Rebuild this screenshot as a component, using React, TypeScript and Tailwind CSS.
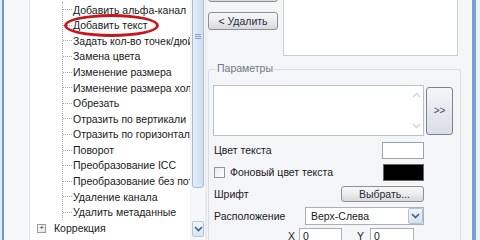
const items = [
  'Добавить альфа-канал',
  'Добавить текст',
  'Задать кол-во точек/дюйм',
  'Замена цвета',
  'Изменение размера',
  'Изменение размера холста',
  'Обрезать',
  'Отразить по вертикали',
  'Отразить по горизонтали',
  'Поворот',
  'Преобразование ICC',
  'Преобразование без потерь',
  'Удаление канала',
  'Удалить метаданные',
];

function Chevron({ className = '' }: { className?: string }) {
  return (
    <svg width="9" height="6" viewBox="0 0 9 6" className={className}>
      <path d="M1 1 L4.5 4.5 L8 1" fill="none" stroke="#3d5f8f" strokeWidth="1.6" />
    </svg>
  );
}

function TreePanel() {
  return (
    <div className="relative flex h-full w-[175px] bg-white">
      <div className="relative flex-1 overflow-hidden pt-[2px]">
        <div className="ml-[32px] border-l border-dotted border-[#a8a8a8]">
          {items.map((t) => (
            <div key={t} className="flex h-[15.6px] items-center whitespace-nowrap">
              <span className="w-[9px] shrink-0 border-t border-dotted border-[#a8a8a8]" />
              <span className="shrink-0 pl-[1px]">{t}</span>
            </div>
          ))}
        </div>
        <div className="flex h-[15.6px] items-center pl-[7px]">
          <span className="flex h-[9px] w-[9px] items-center justify-center border border-[#9a9a9a] bg-gradient-to-br from-white to-[#e4e4e4] text-[8px] leading-none text-[#333]">
            +
          </span>
          <span className="ml-[8px]">Коррекция</span>
        </div>
        <div className="pointer-events-none absolute left-[34px] top-[14px] h-[23px] w-[95px] rounded-[50%] border-[3.5px] border-[#c8161d]" />
      </div>
      <div className="flex w-[15px] flex-col border-l border-[#eef0f2] bg-[#f6f7f8] px-[1px]">
        <div className="-mt-[4px] flex h-[192px] items-center justify-center rounded-[3px] border border-[#a9bcd6] bg-gradient-to-r from-[#e6eef9] to-[#cfdcef]">
          <div className="-mt-[112px] flex flex-col gap-[1px]">
            <span className="h-[1px] w-[6px] bg-[#8aa0c0]" />
            <span className="h-[1px] w-[6px] bg-[#8aa0c0]" />
            <span className="h-[1px] w-[6px] bg-[#8aa0c0]" />
          </div>
        </div>
        <div className="flex-1" />
        <div className="mb-[3px] flex h-[16px] items-center justify-center rounded-[2px] border border-[#b7c6da] bg-gradient-to-b from-[#f2f6fb] to-[#dbe5f2]">
          <Chevron />
        </div>
      </div>
    </div>
  );
}

const btn =
  'flex items-center justify-center rounded-[3px] border border-[#8d9096] bg-gradient-to-b from-[#f7f7f7] via-[#ececec] to-[#d8d8d8] text-[#1d2a44]';

function RightPanel() {
  return (
    <div className="flex h-full w-[265px] flex-col bg-[#f4f5f6]">
      <div className="flex h-[57px]">
        <div className="ml-[1px] flex w-[70px] flex-col">
          <div className={`${btn} -mt-[16px] h-[18px]`} />
          <div className={`${btn} mt-[10px] h-[18px]`}>&lt; Удалить</div>
        </div>
        <div className="-mt-[2px] ml-[5px] h-[58px] w-[175px] border border-[#c9ced4] bg-white" />
      </div>
      <div className="relative mt-[13px] ml-[1px] w-[253px] flex-1 rounded-t-[3px] border border-b-0 border-[#d7dde4]">
        <span className="absolute -top-[7px] left-[7px] bg-[#f4f5f6] px-[1px] text-[#6d7a8c]">Параметры</span>
        <div className="flex pl-[4px] pt-[15px]">
          <div className="flex h-[51px] w-[211px] justify-end border border-[#b9c0c8] bg-white">
            <div className="mr-[1px] flex w-[12px] flex-col items-center justify-between py-[6px] opacity-40">
              <svg width="9" height="6" viewBox="0 0 9 6">
                <path d="M1 5 L4.5 1.5 L8 5" fill="none" stroke="#7f9bc4" strokeWidth="1.4" />
              </svg>
              <Chevron className="opacity-60" />
            </div>
          </div>
          <div className="ml-[2px] mt-[2px] flex h-[48px] w-[27px] items-center justify-center rounded-[3px] border border-[#7d838c] bg-gradient-to-b from-[#f3f5f8] to-[#d9dee6] text-[10px] text-[#3a4a63]">
            &gt;&gt;
          </div>
        </div>
        <div className="w-[215px] pl-[5px]">
          <div className="mt-[6px] flex h-[17px] items-center justify-between">
            <span>Цвет текста</span>
            <div className="h-[17px] w-[42px] border border-[#9ea4ab] bg-white" />
          </div>
          <div className="mt-[5px] flex h-[17px] items-center justify-between">
            <div className="flex items-center">
              <span className="h-[11px] w-[11px] border border-[#8f959c] bg-gradient-to-br from-[#e9ecef] to-white" />
              <span className="ml-[5px]">Фоновый цвет текста</span>
            </div>
            <div className="h-[17px] w-[41px] border border-[#666] bg-black" />
          </div>
          <div className="mt-[5px] flex h-[16px] items-center justify-between">
            <span>Шрифт</span>
            <div className={`${btn} h-[16px] w-[83px] pl-[4px]`}>Выбрать...</div>
          </div>
          <div className="mt-[5px] flex h-[18px] items-center justify-between">
            <span>Расположение</span>
            <div className="flex h-[18px] w-[119px] items-center border border-[#a9b0b8] bg-white">
              <span className="flex-1 pl-[5px]">Верх-Слева</span>
              <div className="flex h-[16px] w-[15px] items-center justify-center rounded-[2px] border border-[#b3c1d3] bg-gradient-to-b from-[#f1f5fa] to-[#d6e0ed]">
                <Chevron />
              </div>
            </div>
          </div>
          <div className="mt-[3px] flex h-[16px] items-center">
            <span className="ml-[74px]">X</span>
            <div className="ml-[4px] h-[16px] w-[43px] border border-[#a9b0b8] bg-white pl-[3px] pt-[2px]">0</div>
            <span className="ml-[15px]">Y</span>
            <div className="ml-[6px] h-[16px] w-[44px] border border-[#a9b0b8] bg-white pl-[3px] pt-[2px]">0</div>
          </div>
        </div>
      </div>
    </div>
  );
}

export default function App() {
  return (
    <div className="flex h-[240px] w-[480px] overflow-hidden bg-[#f3f4f6] font-['Liberation_Sans',sans-serif] text-[10.5px] leading-none text-[#1a1a1a]">
      <div className="w-[2px] bg-[#e6edf6]" />
      <div className="w-[2px] bg-[#7096cf]" />
      <div className="w-[26px] border-r border-[#d9dfe6] bg-[#f6f8fa]" />
      <TreePanel />
      <div className="w-[2px] bg-[#e9ecef]" />
      <RightPanel />
      <div className="w-[4px] bg-[#7c9fd3]" />
      <div className="w-[4px] bg-[#e9f0f8]" />
    </div>
  );
}
